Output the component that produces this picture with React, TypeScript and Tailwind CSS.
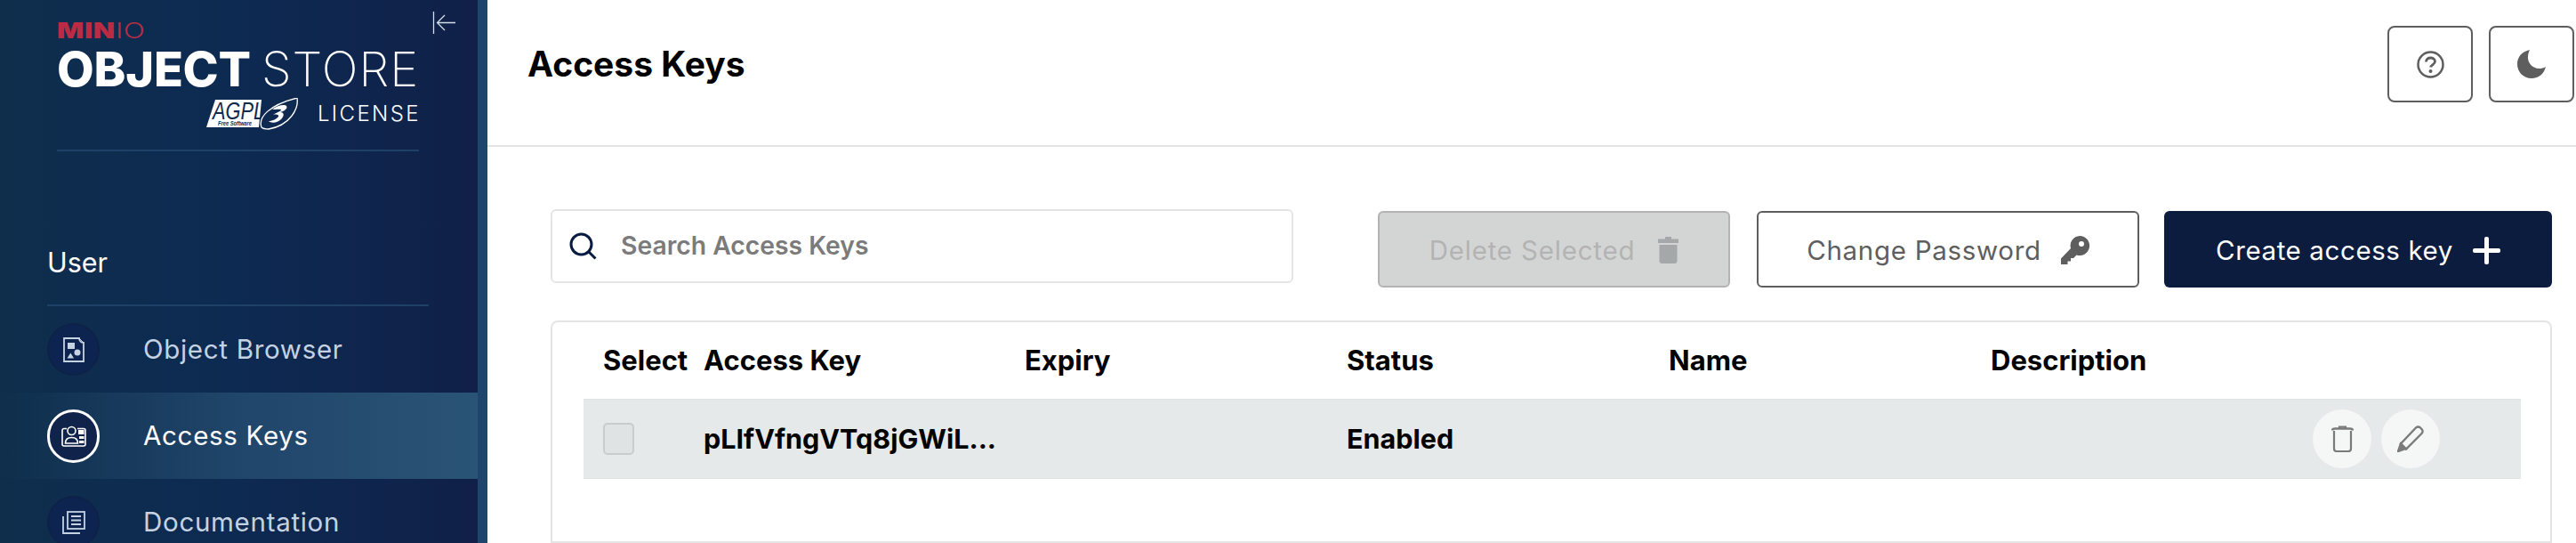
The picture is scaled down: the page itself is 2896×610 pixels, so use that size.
import React from "react";

const GridCols = "grid grid-cols-[113px_361px_362px_362px_362px_1fr]";

function ObjectIcon() {
  return (
    <svg width="24" height="28" viewBox="0 0 24 28" fill="none">
      <path d="M1 1h17a5 5 0 0 0 5 5v21H1z" stroke="#c5d2e2" strokeWidth="1.8" />
      <path d="M18 1l5 5" stroke="#c5d2e2" strokeWidth="1" />
      <rect x="5" y="6" width="8" height="7" fill="#c5d2e2" />
      <circle cx="16" cy="17" r="3.5" fill="#c5d2e2" />
      <path d="M4.5 23.5l3.8-6 3.8 6z" fill="#c5d2e2" />
    </svg>
  );
}
function CardIcon() {
  return (
    <svg width="28" height="24" viewBox="0 0 28 24" fill="none" stroke="#fff" strokeWidth="1.6">
      <path d="M6 3.500H3a2 2 0 0 0-2 2V21a2 2 0 0 0 2 2h22a2 2 0 0 0 2-2V5.500a2 2 0 0 0-2-2h-7" />
      <circle cx="11.500" cy="6" r="4.500" />
      <path d="M4.500 20c0-5 2.500-6.500 7-6.500s7 1.500 7 6.500z" />
      <rect x="19" y="5" width="6.500" height="5" fill="#fff" stroke="none" />
      <rect x="20" y="12" width="5.500" height="3" fill="#fff" stroke="none" />
      <rect x="20" y="17" width="5.500" height="3" fill="#fff" stroke="none" />
    </svg>
  );
}
function DocsIcon() {
  return (
    <svg width="26" height="26" viewBox="0 0 26 26" fill="none">
      <rect x="6" y="1" width="19" height="19" stroke="#c5d2e2" strokeWidth="1.800" />
      <path d="M1 6v19h19" stroke="#c5d2e2" strokeWidth="1.800" />
      <path d="M10 6h11M10 10.500h11M10 15h11" stroke="#c5d2e2" strokeWidth="2.200" />
    </svg>
  );
}

function NavItem({ label, icon, active }: { label: string; icon: React.ReactNode; active?: boolean }) {
  return (
    <div
      className={
        active
          ? "flex h-[97px] shrink-0 items-center pl-[53px] bg-gradient-to-r from-[#0f2e4c] via-[#20466b] to-[#2a5475]"
          : "flex h-[97px] shrink-0 items-center pl-[53px]"
      }
    >
      <div
        className={
          active
            ? "flex h-[60px] w-[59px] shrink-0 items-center justify-center rounded-full border-[3px] border-white bg-[#10234b]"
            : "flex h-[59px] w-[59px] shrink-0 items-center justify-center rounded-full border-2 border-[#0e2248] bg-[#0e2450]"
        }
      >
        {icon}
      </div>
      <span
        className={
          active
            ? "ml-[49px] text-[29.500px] tracking-[0.700px] text-white"
            : "ml-[49px] text-[29.500px] tracking-[0.700px] text-[#c5d2e2]"
        }
      >
        {label}
      </span>
    </div>
  );
}

function AgplLogo() {
  return (
    <svg width="104" height="36" viewBox="0 0 104 36">
      <path d="M10 2h52l-3 31H0z" fill="#fff" />
      <text x="7" y="24" fontFamily="Liberation Sans" fontStyle="italic" fontSize="27" fill="#0e2a50" textLength="58" lengthAdjust="spacingAndGlyphs">AGPL</text>
      <text x="13" y="31" fontFamily="Liberation Sans" fontStyle="italic" fontWeight="700" fontSize="6.500" fill="#0e2a50" textLength="38" lengthAdjust="spacingAndGlyphs">Free Software</text>
      <path d="M62 33C58 22 70 8 102 0c2 12-8 31-32 35-4 0-7-1-8-2z" fill="#0e2a50" stroke="#fff" strokeWidth="1.300" />
      <path d="M74 13c6-5 14-6 16-4 2 3-3 6-7 7 4 0 5 3 2 7-4 5-12 6-15 3 3 0 9-2 11-5 1-2-2-3-6-2 2-2 7-3 9-5 1-2-5-1-10-1z" fill="#fff" />
    </svg>
  );
}

export default function App() {
  return (
    <div className="flex h-[610px] w-[2896px] overflow-hidden bg-white font-['Inter',sans-serif]">
      <aside className="relative flex h-full w-[548px] shrink-0 flex-col border-r-[11px] border-[#20456d] bg-gradient-to-r from-[#0f2e4c] via-[#0d2a52] to-[#102048]">
        <svg className="absolute left-[486px] top-[13px]" width="27" height="25" viewBox="0 0 27 25" fill="none" stroke="#d5dde8" strokeWidth="1.300">
          <path d="M1.500 0v25M26 12.500H6M14 4l-8.500 8.500L14 21" />
        </svg>
        <div className="flex h-[206px] shrink-0 flex-col items-start pl-[64px] pt-[21px]">
          <div className="flex h-[27px] origin-left scale-x-[1.32] items-center text-[24px] leading-none tracking-[0.500px] text-[#b92c44]">
            <span className="font-black">MIN</span>
            <span className="font-light">IO</span>
          </div>
          <div className="mt-[5px] flex h-[50px] w-[407px] items-center justify-between text-[54px] leading-none text-white">
            <span className="font-extrabold tracking-[-0.200px]">OBJECT</span>
            <span className="font-extralight tracking-[1px]">STORE</span>
          </div>
          <div className="mt-[7px] flex h-[36px] w-[407px] items-center justify-end">
            <AgplLogo />
            <span className="ml-[21px] -mr-[2px] text-[24px] font-light leading-none tracking-[2.400px] text-white">LICENSE</span>
          </div>
          <div className="mt-[22px] h-[2px] w-[407px] shrink-0 bg-[#1f4168]" />
        </div>
        <div className="flex h-[138px] shrink-0 flex-col pl-[53px]">
          <div className="mt-[71px] h-[65px] w-[429px] text-[30.500px] leading-[36px] text-white">User</div>
          <div className="h-[2px] w-[429px] shrink-0 bg-[#1f4168]" />
        </div>
        <NavItem label="Object Browser" icon={<ObjectIcon />} />
        <NavItem label="Access Keys" icon={<CardIcon />} active />
        <NavItem label="Documentation" icon={<DocsIcon />} />
      </aside>

      <main className="flex min-w-0 flex-1 flex-col">
        <header className="flex h-[165px] shrink-0 items-start justify-between border-b-2 border-[#e5e5e5] pl-[45px] pr-[2px]">
          <h1 className="mt-[52px] text-[39px] font-bold leading-[40px] text-black">Access Keys</h1>
          <div className="mt-[29px] flex gap-[18px]">
            <button className="flex h-[86px] w-[96px] items-center justify-center rounded-[8px] border-2 border-[#5e5e5e]">
              <svg width="31" height="31" viewBox="0 0 31 31" fill="none">
                <circle cx="15.500" cy="15.500" r="14" stroke="#5e5e5e" strokeWidth="2.500" />
                <path d="M10.500 12.500c0-3 2.300-4.500 5-4.500s5 1.500 5 4c0 3.500-4.700 3.500-4.700 6.500" stroke="#5e5e5e" strokeWidth="2.800" />
                <circle cx="15.500" cy="23" r="2" fill="#5e5e5e" />
              </svg>
            </button>
            <button className="flex h-[86px] w-[96px] items-center justify-center rounded-[8px] border-2 border-[#5e5e5e]">
              <svg width="32" height="32" viewBox="0 0 32 32">
                <path d="M14 0C5 2 0 8 0 16c0 9 7 16 16 16 8 0 14-5 16-13-2 1.500-5 2-7.500 2C17 21 11 14 12 7c.3-3 1-5 2-7z" fill="#5e5e5e" />
              </svg>
            </button>
          </div>
        </header>

        <div className="flex min-h-0 flex-1 flex-col pl-[71px] pr-[27px] pt-[70px]">
          <div className="flex h-[88px] shrink-0 items-start justify-between">
            <div className="flex h-[83px] w-[835px] items-center rounded-[6px] border-2 border-[#e5e5e5] pl-[19px]">
              <svg width="31" height="31" viewBox="0 0 31 31" fill="none" stroke="#081c42" strokeWidth="3">
                <circle cx="13.500" cy="13.500" r="11.500" />
                <path d="M21.500 21.500L29.500 29.500" />
              </svg>
              <span className="ml-[27px] text-[28.300px] font-semibold text-[#7b7b7b]">Search Access Keys</span>
            </div>
            <div className="mt-[2px] flex">
              <button className="flex h-[86px] w-[396px] items-center justify-center rounded-[6px] border-2 border-[#b3b3b3] bg-[#d3d5d5] pt-[2px] text-[29.500px] tracking-[0.800px] text-[#b3b3b3]">
                Delete Selected
                <svg className="ml-[26px]" width="23" height="30" viewBox="0 0 23 30" fill="#a5a8a8">
                  <path d="M8 0h7v2.500h8V7H0V2.500h8zM1.500 9h20v18a3 3 0 0 1-3 3h-14a3 3 0 0 1-3-3z" />
                </svg>
              </button>
              <button className="ml-[30px] flex h-[86px] w-[430px] items-center justify-center rounded-[6px] border-2 border-[#5e5e5e] bg-white pt-[2px] text-[29.500px] tracking-[0.700px] text-[#5e5e5e]">
                Change Password
                <svg className="ml-[22px]" width="32" height="32" viewBox="0 0 32 32" fill="#5e5e5e">
                  <path fillRule="evenodd" d="M21 0a11 11 0 1 1-3.500 21.400L14 25h-3v3.500H7.500V32H0v-6.500L11 14A11 11 0 0 1 21 0zm2 6a3 3 0 1 0 0 6 3 3 0 0 0 0-6z" />
                </svg>
              </button>
              <button className="ml-[28px] flex h-[86px] w-[436px] items-center justify-center rounded-[6px] bg-[#0c1c3f] pt-[2px] text-[29.500px] tracking-[0.600px] text-white">
                Create access key
                <svg className="ml-[22px]" width="31" height="31" viewBox="0 0 31 31" fill="#fff">
                  <rect x="13" y="0" width="5" height="31" rx="2" />
                  <rect x="0" y="13" width="31" height="5" rx="2" />
                </svg>
              </button>
            </div>
          </div>

          <div className="mt-[37px] min-h-0 flex-1 rounded-t-[8px] border-2 border-[#e5e5e5] pl-[35px] pr-[33px]">
            <div className={`${GridCols} h-[86px] items-center pl-[22px] text-[31px] font-bold text-black`}>
              <div>Select</div>
              <div>Access Key</div>
              <div>Expiry</div>
              <div>Status</div>
              <div>Name</div>
              <div>Description</div>
            </div>
            <div className={`${GridCols} h-[90px] items-center border-y border-[#e0e3e3] bg-[#e6e9ea] pl-[22px] text-[30.500px] font-bold text-black`}>
              <div className="h-[36px] w-[35px] rounded-[5px] border-2 border-[#c8cccc] bg-[#e0e3e3]" />
              <div className="truncate">pLIfVfngVTq8jGWiL...</div>
              <div />
              <div>Enabled</div>
              <div />
              <div className="flex gap-[11px] pl-[362px]">
                <span className="flex h-[66px] w-[66px] shrink-0 items-center justify-center rounded-full bg-[#f5f6f6]">
                  <svg width="25" height="30" viewBox="0 0 25 30" fill="none" stroke="#7a7a7a" strokeWidth="2.200">
                    <path d="M1 5.500c0-1.500 1-2 3-2h17c2 0 3 .5 3 2" strokeWidth="2.600" />
                    <path d="M9 3V1.500h7V3" />
                    <path d="M3 6v20a3 3 0 0 0 3 3h13a3 3 0 0 0 3-3V6" />
                  </svg>
                </span>
                <span className="flex h-[66px] w-[66px] shrink-0 items-center justify-center rounded-full bg-[#f5f6f6]">
                  <svg width="30" height="30" viewBox="0 0 30 30" fill="none" stroke="#7a7a7a" strokeWidth="2.400">
                    <path d="M21 2.500a3.500 3.500 0 0 1 5 0l1.500 1.500a3.500 3.500 0 0 1 0 5L10 26.500l-6-6z" />
                    <path d="M4 20.500L1 29l8.500-3z" fill="#7a7a7a" />
                  </svg>
                </span>
              </div>
            </div>
          </div>
        </div>
      </main>
    </div>
  );
}
